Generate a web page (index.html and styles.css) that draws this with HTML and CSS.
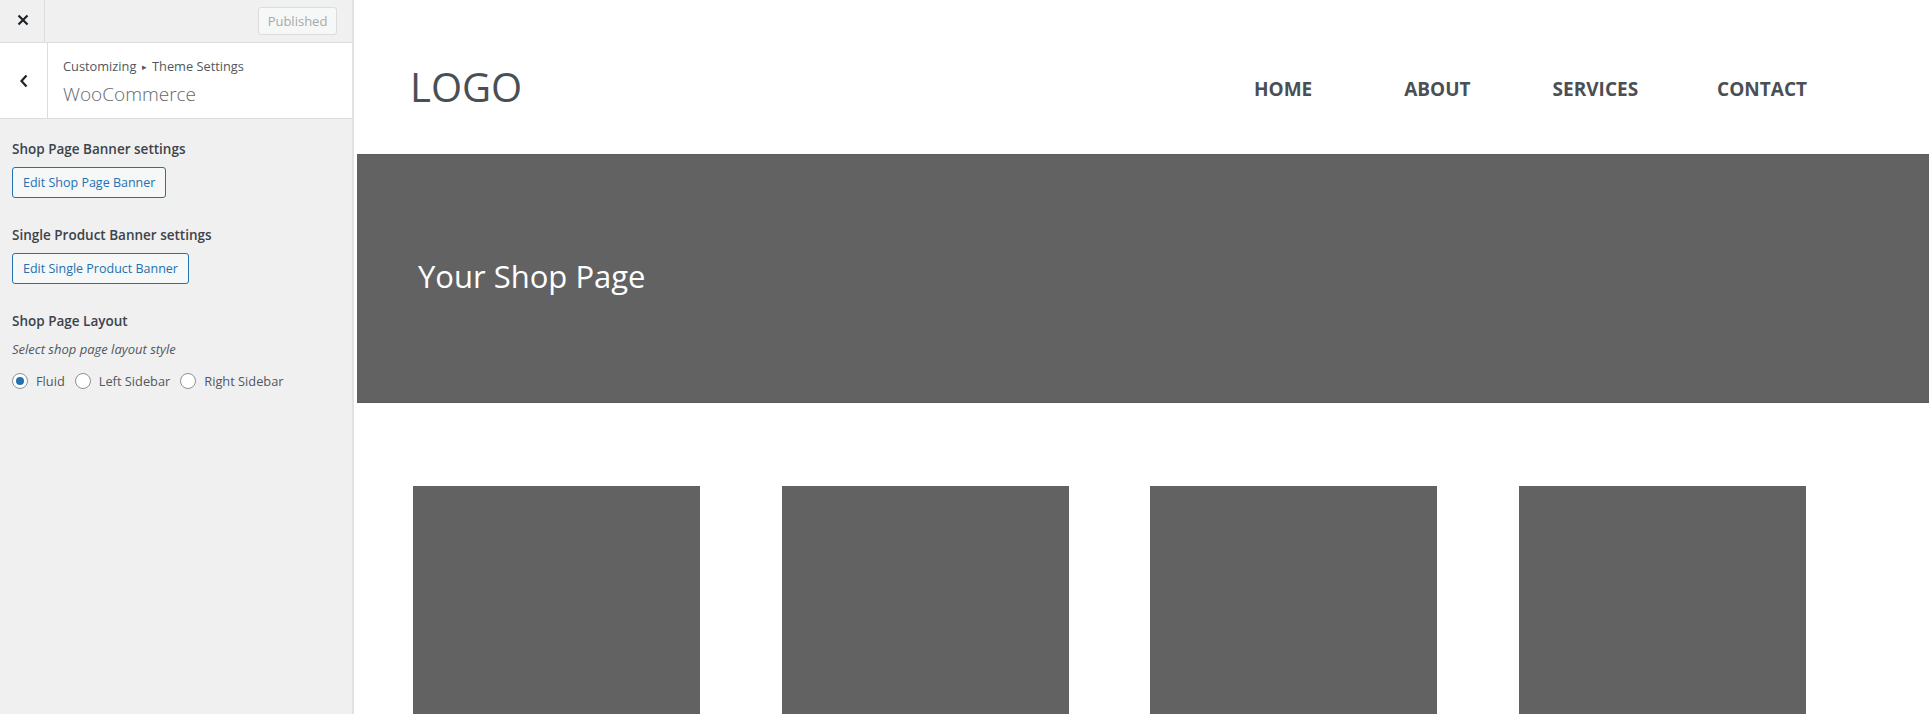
FILE: index.html
```html
<!DOCTYPE html>
<html lang="en">
<head>
<meta charset="utf-8">
<title>Customizing WooCommerce</title>
<link rel="stylesheet" href="styles.css">
</head>
<body>
<div class="app">
  <aside class="sidebar">
    <div class="topbar">
      <button class="close-btn" aria-label="Close">
        <svg width="12" height="12" viewBox="0 0 12 12"><path d="M1.5 1.5 L10.5 10.5 M10.5 1.5 L1.5 10.5" stroke="#1d2327" stroke-width="2.2" fill="none"/></svg>
      </button>
      <div class="topbar-fill"></div>
      <button class="published-btn" disabled>Published</button>
    </div>
    <div class="section-head">
      <button class="back-btn" aria-label="Back">
        <svg width="8" height="14" viewBox="0 0 8 14"><path d="M6.5 1.5 L1.5 7 L6.5 12.5" stroke="#1d2327" stroke-width="2.2" fill="none"/></svg>
      </button>
      <div class="section-titles">
        <div class="crumb">Customizing <span class="crumb-sep">&#9656;</span> Theme Settings</div>
        <h2 class="section-name">WooCommerce</h2>
      </div>
    </div>
    <div class="controls">
      <div class="control">
        <div class="control-title">Shop Page Banner settings</div>
        <button class="edit-btn">Edit Shop Page Banner</button>
      </div>
      <div class="control">
        <div class="control-title">Single Product Banner settings</div>
        <button class="edit-btn">Edit Single Product Banner</button>
      </div>
      <div class="control">
        <div class="control-title">Shop Page Layout</div>
        <div class="control-desc">Select shop page layout style</div>
        <div class="radios">
          <label class="radio"><span class="radio-dot checked"></span>Fluid</label>
          <label class="radio"><span class="radio-dot"></span>Left Sidebar</label>
          <label class="radio"><span class="radio-dot"></span>Right Sidebar</label>
        </div>
      </div>
    </div>
  </aside>
  <main class="preview">
    <header class="site-header">
      <div class="logo">LOGO</div>
      <nav class="menu">
        <a class="menu-item">HOME</a>
        <a class="menu-item">ABOUT</a>
        <a class="menu-item">SERVICES</a>
        <a class="menu-item">CONTACT</a>
      </nav>
    </header>
    <section class="banner">
      <h1 class="banner-title">Your Shop Page</h1>
    </section>
    <div class="products">
      <div class="product"></div>
      <div class="product"></div>
      <div class="product"></div>
      <div class="product"></div>
    </div>
  </main>
</div>
</body>
</html>
```

FILE: styles.css
```css
* { box-sizing: border-box; }
html, body {
  margin: 0;
  padding: 0;
  height: 714px;
  overflow: hidden;
  background: #fff;
  font-family: "Open Sans", "Noto Sans", sans-serif;
}
.app {
  display: flex;
  height: 714px;
}
.sidebar {
  width: 354px;
  flex: 0 0 354px;
  background: #f0f0f1;
  border-right: 2px solid #e2e2e4;
  display: flex;
  flex-direction: column;
}
.topbar {
  height: 43px;
  display: flex;
  align-items: center;
  border-bottom: 1px solid #dcdcde;
}
.close-btn {
  width: 45px;
  height: 42px;
  border: 0;
  border-right: 1px solid #dcdcde;
  background: transparent;
  display: flex;
  align-items: center;
  justify-content: center;
  padding: 0 0 2px 2px;
}
.topbar-fill { flex: 1; }
.published-btn {
  width: 79px;
  height: 28px;
  margin-right: 15px;
  margin-bottom: 1px;
  border: 1px solid #dcdcde;
  border-radius: 3px;
  background: #f6f7f7;
  color: #a7aaad;
  font-family: inherit;
  font-size: 13px;
  padding: 0;
}
.section-head {
  height: 76px;
  background: #fff;
  border-bottom: 1px solid #dcdcde;
  display: flex;
}
.back-btn {
  width: 48px;
  border: 0;
  border-right: 1px solid #dcdcde;
  background: #fff;
  display: flex;
  align-items: center;
  justify-content: center;
  padding: 1px 0 0 0;
}
.section-titles {
  padding: 14px 0 0 15px;
}
.crumb {
  font-size: 12.8px;
  line-height: 18px;
  color: #50575e;
}
.crumb-sep {
  font-size: 9px;
  position: relative;
  top: -1px;
  margin: 0 2px;
}
.section-name {
  margin: 5px 0 0;
  font-size: 19px;
  line-height: 24px;
  font-weight: 300;
  color: #646970;
}
.controls {
  padding: 20px 12px 0;
  display: flex;
  flex-direction: column;
  gap: 27px;
}
.control {
  display: flex;
  flex-direction: column;
  align-items: flex-start;
}
.control-title {
  font-size: 13.5px;
  line-height: 20px;
  font-weight: 600;
  color: #3c434a;
  margin-bottom: 8px;
}
.edit-btn {
  height: 31px;
  padding: 0 10px;
  border: 1px solid #2271b1;
  border-radius: 3px;
  background: #f6f7f7;
  color: #2271b1;
  font-family: inherit;
  font-size: 12.5px;
}
.control-desc {
  font-size: 13px;
  line-height: 18px;
  font-style: italic;
  color: #50575e;
  margin-top: 1px;
}
.radios {
  margin-top: 14px;
  display: flex;
  align-items: center;
  gap: 10px;
}
.radio {
  display: flex;
  align-items: center;
  gap: 8px;
  font-size: 12.8px;
  color: #50575e;
}
.radio-dot {
  width: 16px;
  height: 16px;
  border: 1px solid #8c8f94;
  border-radius: 50%;
  background: #fff;
  display: flex;
  align-items: center;
  justify-content: center;
}
.radio-dot.checked::after {
  content: "";
  width: 8px;
  height: 8px;
  border-radius: 50%;
  background: #2271b1;
}
.preview {
  flex: 1;
  padding-left: 3px;
  background: #fff;
  overflow: hidden;
}
.site-header {
  height: 154px;
  display: flex;
  justify-content: space-between;
  align-items: flex-start;
  padding: 0 122px 0 53px;
}
.logo {
  margin-top: 60px;
  font-size: 40px;
  line-height: 54px;
  color: #4a4f55;
}
.menu {
  margin-top: 76px;
  display: flex;
}
.menu-item {
  font-size: 19px;
  line-height: 26px;
  font-weight: 700;
  color: #4a4f55;
  text-decoration: none;
}
.menu-item:nth-child(2) { margin-left: 92px; }
.menu-item:nth-child(3) { margin-left: 82px; }
.menu-item:nth-child(4) { margin-left: 79px; }
.banner {
  height: 249px;
  background: #626262;
  border-top: 1px solid #5c5c5c;
  border-bottom: 1px solid #5a5a5a;
  padding: 0 0 0 61px;
  display: flex;
  align-items: center;
}
.banner-title {
  margin: 0 0 6px;
  font-size: 31px;
  line-height: 42px;
  font-weight: 400;
  color: #fff;
}
.products {
  margin-top: 83px;
  padding: 0 123px 0 56px;
  display: grid;
  grid-template-columns: repeat(4, 287px);
  justify-content: space-between;
}
.product {
  height: 300px;
  background: #626262;
}
```
